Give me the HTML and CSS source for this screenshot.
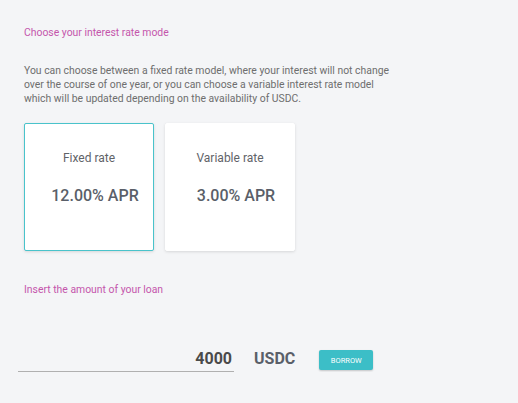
FILE: index.html
```html
<!DOCTYPE html>
<html>
<head>
<meta charset="utf-8">
<link rel="stylesheet" href="styles.css">
</head>
<body>
<div class="page">
  <h2 class="title">Choose your interest rate mode</h2>
  <p class="desc">You can choose between a fixed rate model, where your interest will not change<br>over the course of one year, or you can choose a variable interest rate model<br>which will be updated depending on the availability of USDC.</p>
  <div class="cards">
    <div class="card selected">
      <div class="label">Fixed rate</div>
      <div class="rate">12.00% APR</div>
    </div>
    <div class="card">
      <div class="label">Variable rate</div>
      <div class="rate">3.00% APR</div>
    </div>
  </div>
  <div class="loan-label">Insert the amount of your loan</div>
  <div class="loan-row">
    <div class="amount">4000</div>
    <div class="currency">USDC</div>
    <button class="borrow">BORROW</button>
  </div>
</div>
</body>
</html>
```
FILE: styles.css
```css
html, body {
  margin: 0;
  padding: 0;
  background: #f4f5f7;
  font-family: Roboto, "Liberation Sans", sans-serif;
}
.page {
  padding: 26px 0 0 24px;
}
.title {
  margin: 0;
  font-size: 10.4px;
  line-height: 14px;
  font-weight: 400;
  color: #c455ac;
}
.desc {
  margin: 24px 0 0 0;
  font-size: 10.4px;
  line-height: 14px;
  color: #6e6e6e;
}
.cards {
  display: flex;
  gap: 11px;
  margin-top: 17px;
}
.card {
  width: 128px;
  height: 126px;
  background: #fff;
  border: 1px solid #fff;
  border-radius: 2px;
  box-shadow: 0 1px 3px rgba(0,0,0,0.12);
  display: flex;
  flex-direction: column;
  align-items: center;
}
.card.selected {
  border-color: #49c3cb;
}
.label {
  margin-top: 26px;
  font-size: 12px;
  line-height: 16px;
  color: #5f6368;
}
.rate {
  margin-top: 20px;
  padding-left: 12px;
  font-size: 16px;
  line-height: 20px;
  font-weight: 500;
  color: #5a5f69;
}
.loan-label {
  margin-top: 32px;
  font-size: 10.4px;
  line-height: 14px;
  color: #c455ac;
}
.loan-row {
  display: flex;
  align-items: center;
  margin-top: 51px;
  margin-left: -6px;
}
.amount {
  width: 216px;
  box-sizing: border-box;
  padding-right: 2px;
  text-align: right;
  font-size: 16px;
  line-height: 22px;
  font-weight: 700;
  color: #4a4a4a;
  border-bottom: 1px solid #b0b0b0;
  padding-bottom: 1px;
}
.currency {
  margin-left: 20px;
  font-size: 16px;
  font-weight: 700;
  color: #5a5f69;
  margin-top: -4px;
}
.borrow {
  margin-left: 24px;
  width: 54px;
  height: 20px;
  padding: 0;
  border: none;
  border-radius: 2px;
  background: #3cbec7;
  color: #fff;
  font-family: Roboto, "Liberation Sans", sans-serif;
  font-size: 7.5px;
  box-shadow: 0 1px 2px rgba(0,0,0,0.2);
}
```
